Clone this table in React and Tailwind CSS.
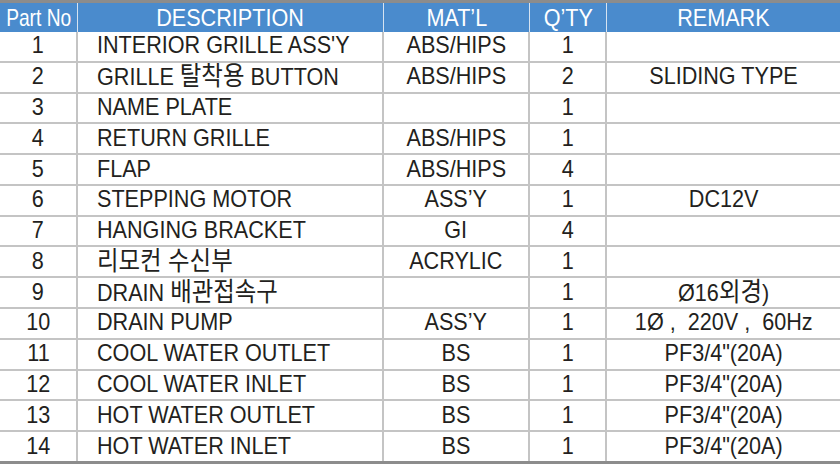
import React from 'react';

const rows = [
  ['1', 'INTERIOR GRILLE ASS\'Y', 'ABS/HIPS', '1', ''],
  ['2', 'GRILLE 탈착용 BUTTON', 'ABS/HIPS', '2', 'SLIDING TYPE'],
  ['3', 'NAME PLATE', '', '1', ''],
  ['4', 'RETURN GRILLE', 'ABS/HIPS', '1', ''],
  ['5', 'FLAP', 'ABS/HIPS', '4', ''],
  ['6', 'STEPPING MOTOR', 'ASS\u2019Y', '1', 'DC12V'],
  ['7', 'HANGING BRACKET', 'GI', '4', ''],
  ['8', '리모컨 수신부', 'ACRYLIC', '1', ''],
  ['9', 'DRAIN 배관접속구', '', '1', 'Ø16외경)'],
  ['10', 'DRAIN PUMP', 'ASS\u2019Y', '1', '1Ø ,  220V ,  60Hz'],
  ['11', 'COOL WATER OUTLET', 'BS', '1', 'PF3/4"(20A)'],
  ['12', 'COOL WATER INLET', 'BS', '1', 'PF3/4"(20A)'],
  ['13', 'HOT WATER OUTLET', 'BS', '1', 'PF3/4"(20A)'],
  ['14', 'HOT WATER INLET', 'BS', '1', 'PF3/4"(20A)'],
];

const cols = 'grid grid-cols-[78px_306px_146px_77px_1fr]';
const cell = 'flex items-center border-r-2 border-[#c4c4c4] pb-[2px]';

// hangul runs get a larger size so they keep the wider look of the print
const split = (s) =>
  s.split(/([\uac00-\ud7a3]+(?: [\uac00-\ud7a3]+)*)/).map((p, i) =>
    /[\uac00-\ud7a3]/.test(p) ? <span key={i} className="text-[26px]">{p}</span> : p
  );

const T = ({ children, left }) => (
  <span className={`inline-block whitespace-pre scale-x-[0.9] ${left ? 'origin-left' : ''}`}>
    {typeof children === 'string' ? split(children) : children}
  </span>
);

export default function App() {
  return (
    <div
      className="w-[840px] h-[464px] bg-white flex flex-col border-t-[3px] border-b-[3px] border-[#8c8c8c] overflow-hidden"
      style={{ fontFamily: '"Liberation Sans", "Noto Sans CJK KR", sans-serif' }}
    >
      <div className={`${cols} h-[29px] bg-[#4a8bcd] text-white text-[24px] leading-none`}>
        <div className="flex items-center justify-center border-r border-[#d6e3f1]">
          <span className="inline-block scale-x-[0.8] whitespace-nowrap">Part No</span>
        </div>
        <div className="flex items-center justify-center border-r border-[#d6e3f1]"><T>DESCRIPTION</T></div>
        <div className="flex items-center justify-center border-r border-[#d6e3f1]"><T>MAT&rsquo;L</T></div>
        <div className="flex items-center justify-center border-r border-[#d6e3f1]"><T>Q&rsquo;TY</T></div>
        <div className="flex items-center justify-center"><T>REMARK</T></div>
      </div>
      {rows.map((r, i) => (
        <div
          key={r[0]}
          className={`${cols} flex-1 text-[24px] leading-none text-[#231f20] ${i < rows.length - 1 ? 'border-b-2 border-[#c4c4c4]' : ''}`}
        >
          <div className={`${cell} justify-center`}><T>{r[0]}</T></div>
          <div className={`${cell} pl-[19px]`}><T left>{r[1]}</T></div>
          <div className={`${cell} justify-center`}><T>{r[2]}</T></div>
          <div className={`${cell} justify-center`}><T>{r[3]}</T></div>
          <div className="flex items-center justify-center pb-[2px]"><T>{r[4]}</T></div>
        </div>
      ))}
    </div>
  );
}
